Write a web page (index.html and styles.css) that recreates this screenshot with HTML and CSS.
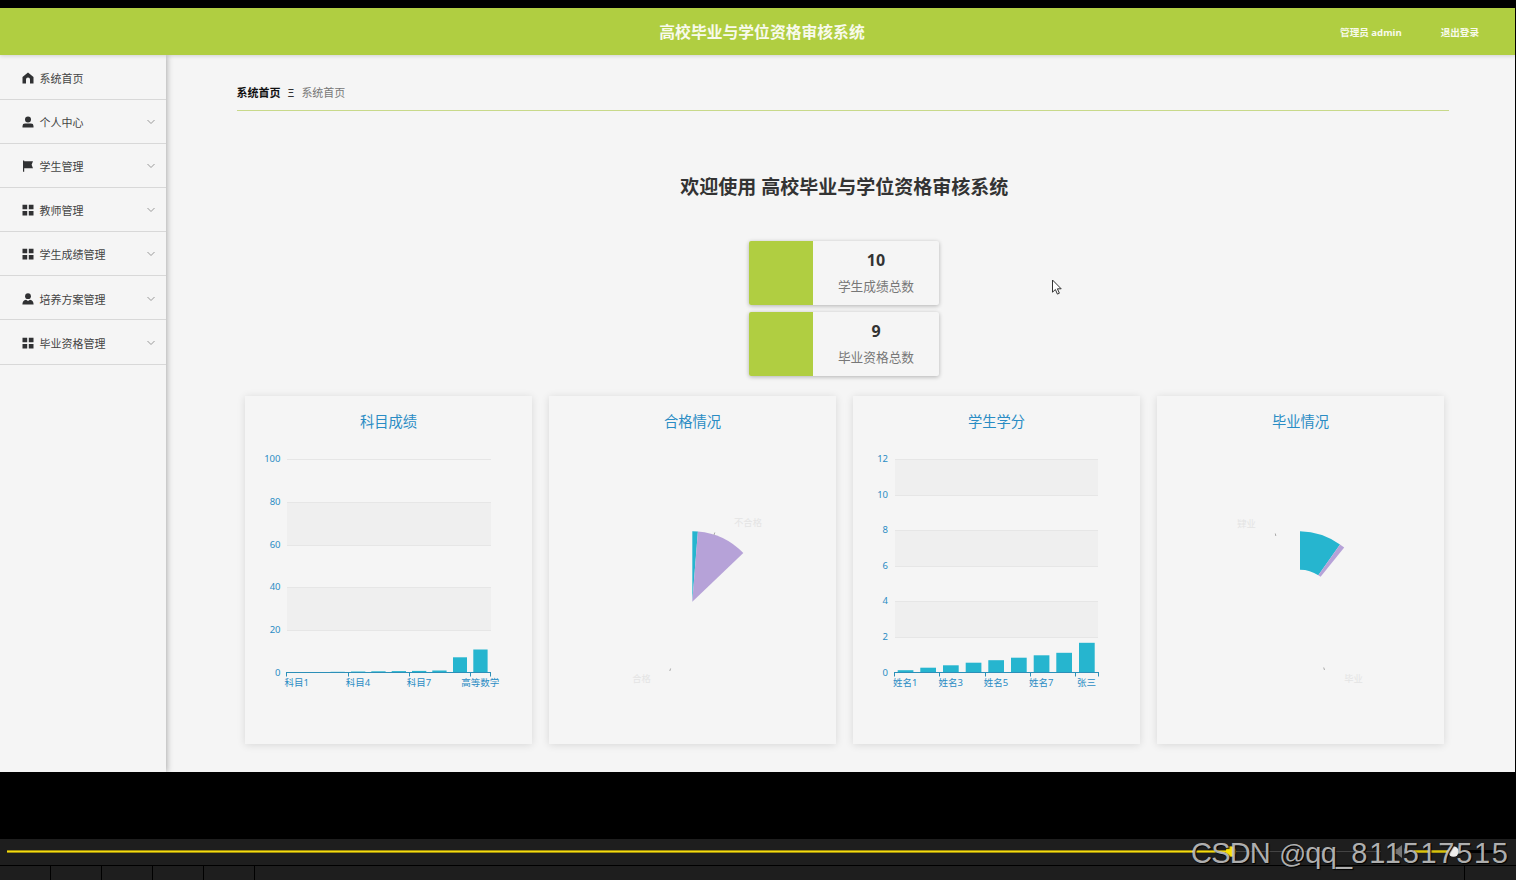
FILE: index.html
```html
<!DOCTYPE html>
<html lang="zh-CN">
  <head>
    <meta charset="UTF-8" />
    <meta name="viewport" content="width=device-width, initial-scale=1.0" />
    <title>高校毕业与学位资格审核系统</title>
    <link rel="stylesheet" href="styles.css">
  </head>
  <body>
    <!-- shared icons -->
    <svg class="sprite" width="0" height="0">
      <symbol id="icon-home" viewBox="0 0 12 12"><path d="M6 .6 11.5 5v6.4H8V7.6a2 2 0 0 0-4 0v3.8H.5V5z" /></symbol>
      <symbol id="icon-user" viewBox="0 0 12 12"><circle cx="6" cy="3.4" r="3" /><path d="M.5 11.4V10Q.5 7.6 3 7.6h6q2.500 0 2.500 2.400v1.400z" /></symbol>
      <symbol id="icon-flag" viewBox="0 0 12 12"><path d="M1 .4h1.200v.8H11L9.600 4.700 11 8.300H2.200v3.500H1z" /></symbol>
      <symbol id="icon-grid" viewBox="0 0 12 12"><path d="M.5.700h4.700v4.500H.5zM6.800.700h4.700v4.500H6.800zM.5 6.900h4.700v4.500H.5zM6.800 6.900h4.700v4.500H6.800z" /></symbol>
      <symbol id="icon-person" viewBox="0 0 12 12"><circle cx="6" cy="3.200" r="2.900" /><path d="M.4 11.500Q.4 7.500 4 6.700l2 1.200 2-1.200q3.600.8 3.600 4.800z" /></symbol>
      <symbol id="icon-arrow" viewBox="0 0 10 6"><path d="M1.500 1 5 4.500 8.500 1" fill="none" stroke="#999" /></symbol>
    </svg>

    <div class="app">
      <header class="header">
        <div class="header-title">高校毕业与学位资格审核系统</div>
        <div class="header-user">
          <span>管理员 admin</span>
          <span>退出登录</span>
        </div>
      </header>
      <div class="body">
        <nav class="sidebar">
          <ul class="menu">
            <li><svg class="icon"><use href="#icon-home" /></svg><span>系统首页</span></li>
            <li><svg class="icon"><use href="#icon-user" /></svg><span>个人中心</span><svg class="arrow"><use href="#icon-arrow" /></svg></li>
            <li><svg class="icon"><use href="#icon-flag" /></svg><span>学生管理</span><svg class="arrow"><use href="#icon-arrow" /></svg></li>
            <li><svg class="icon"><use href="#icon-grid" /></svg><span>教师管理</span><svg class="arrow"><use href="#icon-arrow" /></svg></li>
            <li><svg class="icon"><use href="#icon-grid" /></svg><span>学生成绩管理</span><svg class="arrow"><use href="#icon-arrow" /></svg></li>
            <li><svg class="icon"><use href="#icon-person" /></svg><span>培养方案管理</span><svg class="arrow"><use href="#icon-arrow" /></svg></li>
            <li><svg class="icon"><use href="#icon-grid" /></svg><span>毕业资格管理</span><svg class="arrow"><use href="#icon-arrow" /></svg></li>
          </ul>
        </nav>
        <main class="main">
          <div class="breadcrumb">
            <b>系统首页</b><i>Ξ</i><span>系统首页</span>
          </div>
          <div class="home">
            <h1 class="welcome">欢迎使用 高校毕业与学位资格审核系统</h1>
            <div class="stats">
              <div class="stat">
                <div class="stat-color"></div>
                <div class="stat-info"><strong>10</strong><span>学生成绩总数</span></div>
              </div>
              <div class="stat">
                <div class="stat-color"></div>
                <div class="stat-info"><strong>9</strong><span>毕业资格总数</span></div>
              </div>
            </div>
            <div class="charts">
              <section class="chart">
                <svg width="287" height="348">
                  <text class="chart-title" x="143.500" y="31">科目成绩</text>
                  <path class="band" d="M42 106h204v43H42zM42 191h204v43H42z" />
                  <path class="line" d="M42 63.500h204M42 106.500h204M42 149.500h204M42 191.500h204M42 234.500h204" />
                  <g class="y-label">
                    <text x="35.500" y="66">100</text>
                    <text x="35.500" y="108.500">80</text>
                    <text x="35.500" y="151.500">60</text>
                    <text x="35.500" y="194">40</text>
                    <text x="35.500" y="236.500">20</text>
                    <text x="35.500" y="279.500">0</text>
                  </g>
                  <g class="bar">
                    <rect x="65" y="276.200" width="14.300" height=".8" />
                    <rect x="85.500" y="275.800" width="14.300" height="1.200" />
                    <rect x="106" y="275.500" width="14.300" height="1.500" />
                    <rect x="126.300" y="275.300" width="14.300" height="1.700" />
                    <rect x="146.700" y="275.100" width="14.300" height="1.900" />
                    <rect x="167" y="274.900" width="14.300" height="2.100" />
                    <rect x="187.300" y="274.500" width="14.300" height="2.500" />
                    <rect x="208" y="261.300" width="14" height="15.700" />
                    <rect x="228.300" y="253.500" width="14.300" height="23.500" />
                  </g>
                  <path class="axis" d="M41 276.500h205M41.500 276v4.500M103.500 276v4.500M164.500 276v4.500M225.500 276v4.500M245.500 276v4.500" />
                  <g class="x-label">
                    <text x="51.700" y="290">科目1</text>
                    <text x="113" y="290">科目4</text>
                    <text x="174" y="290">科目7</text>
                    <text x="235.300" y="290">高等数学</text>
                  </g>
                </svg>
              </section>
              <section class="chart">
                <svg width="287" height="348">
                  <text class="chart-title" x="143.500" y="31">合格情况</text>
                  <path class="pie-a" d="M143.300 205.700V135.200A70.500 70.500 0 0 1 148.900 135.400z" />
                  <path class="pie-b" d="M143.300 205.700 148.900 135.400A70.500 70.500 0 0 1 194.300 157z" />
                  <path class="pie-tick" d="M165 139l.8-2.500M120.800 275l.8-2.500" />
                  <text class="pie-label" x="199" y="129.500" text-anchor="middle">不合格</text>
                  <text class="pie-label" x="92.500" y="286" text-anchor="middle">合格</text>
                </svg>
              </section>
              <section class="chart">
                <svg width="287" height="348">
                  <text class="chart-title" x="143.500" y="31">学生学分</text>
                  <path class="band" d="M42 63h203v36H42zM42 134h203v36H42zM42 205h203v36H42z" />
                  <path class="line" d="M42 63.500h203M42 99.500h203M42 134.500h203M42 170.500h203M42 205.500h203M42 241.500h203" />
                  <g class="y-label">
                    <text x="35" y="66">12</text>
                    <text x="35" y="101.500">10</text>
                    <text x="35" y="137">8</text>
                    <text x="35" y="172.500">6</text>
                    <text x="35" y="208">4</text>
                    <text x="35" y="243.500">2</text>
                    <text x="35" y="279.500">0</text>
                  </g>
                  <g class="bar">
                    <rect x="44.700" y="274.200" width="15.700" height="2.800" />
                    <rect x="67.300" y="271.700" width="15.700" height="5.300" />
                    <rect x="90" y="269.300" width="15.700" height="7.700" />
                    <rect x="112.700" y="266.700" width="15.700" height="10.300" />
                    <rect x="135.300" y="264.200" width="15.700" height="12.800" />
                    <rect x="158" y="261.700" width="15.700" height="15.300" />
                    <rect x="180.700" y="259.300" width="15.700" height="17.700" />
                    <rect x="203.300" y="256.800" width="15.700" height="20.200" />
                    <rect x="226" y="246.800" width="15.700" height="30.200" />
                  </g>
                  <path class="axis" d="M41 276.500h205M41.500 276v4.500M86.500 276v4.500M132.500 276v4.500M177.500 276v4.500M222.500 276v4.500M245.500 276v4.500" />
                  <g class="x-label">
                    <text x="52.300" y="290">姓名1</text>
                    <text x="97.700" y="290">姓名3</text>
                    <text x="143" y="290">姓名5</text>
                    <text x="188.300" y="290">姓名7</text>
                    <text x="233.500" y="290">张三</text>
                  </g>
                </svg>
              </section>
              <section class="chart">
                <svg width="287" height="348">
                  <text class="chart-title" x="143.500" y="31">毕业情况</text>
                  <path class="pie-a" d="M143 135.200A70.500 70.500 0 0 1 183 148.500L161.300 179.300A32 32 0 0 0 143 173.700z" />
                  <path class="pie-b" d="M183 148.500A70.500 70.500 0 0 1 187.200 151.600L163.600 180.800L161.300 179.300z" />
                  <path class="pie-tick" d="M118.800 140l-.5-2.500M167.500 274l-.8-2.500" />
                  <text class="pie-label" x="89.500" y="131" text-anchor="middle">肄业</text>
                  <text class="pie-label" x="196.500" y="286" text-anchor="middle">毕业</text>
                </svg>
              </section>
            </div>
          </div>
        </main>
      </div>
    </div>

    <footer class="player">
      <svg class="player-track" width="1516" height="26">
        <path d="M7 12.500h1224" stroke="#9c8b0c" stroke-width="3" />
        <path d="M7 12.500h1224" stroke="#f5dc10" />
        <path d="M1231 12.500h150" stroke="#444" />
        <circle cx="1231" cy="12.500" r="5.200" fill="#f9e000" />
        <path d="M1393 10h4l5-4v13l-5-4h-4z" fill="#777" />
        <path d="M1404.500 9.500v6" stroke="#555" />
        <path d="M1414 12.500h36" stroke="#d8c20c" stroke-width="2.500" />
        <path d="M1458 12.500h40" stroke="#000" stroke-width="3" />
        <circle cx="1453.500" cy="12.500" r="5.200" fill="#eee" />
      </svg>
      <div class="player-tabs">
        <i></i><i></i><i></i><i></i><i></i><i class="last"></i>
      </div>
    </footer>

    <svg class="cursor" width="12" height="17" viewBox="0 0 12 17">
      <path d="M1.500 1v12.200l2.900-2.700 2 4.600 2-.9-2-4.400h3.800z" fill="#fff" stroke="#333" />
    </svg>
    <div class="watermark">CSDN <span class="at">@</span>qq_<span class="digits">811517515</span></div>
  </body>
</html>
```
FILE: styles.css
```css
* {
  box-sizing: border-box;
}
body {
  margin: 0;
  height: 880px;
  padding-top: 8px;
  display: flex;
  flex-direction: column;
  justify-content: space-between;
  overflow: hidden;
  background-color: #000;
  font-family: "Noto Sans", "Noto Sans CJK SC", sans-serif;
}
.sprite {
  position: absolute;
}
.app {
  width: 1515px;
  height: 764px;
  display: flex;
  flex-direction: column;
  overflow: hidden;
  background-color: #f5f5f5;
}

/* header */
.header {
  flex: none;
  height: 47px;
  display: grid;
  grid-template-columns: 1fr auto 1fr;
  align-items: center;
  padding: 0 36px 0 45px;
  color: #f8faec;
  font-weight: bold;
  background-color: #b0ce41;
  box-shadow: 0 1px 4px rgba(0, 0, 0, 0.15);
}
.header-title {
  grid-column: 2;
  font-size: 15.8px;
}
.header-user {
  display: flex;
  justify-content: flex-end;
  gap: 39px;
  font-size: 9.6px;
}
.body {
  flex: 1;
  display: flex;
  overflow: hidden;
}

/* sidebar */
.sidebar {
  width: 166px;
  box-shadow: 1px 0 6px rgba(0, 0, 0, 0.3);
}
.menu {
  list-style: none;
  margin: 0;
  padding: 0.6px 0 0;
}
.menu li {
  height: 44.15px;
  display: flex;
  align-items: center;
  padding: 1.4px 10px 0 21.5px;
  border-bottom: 1px solid #d8d8d8;
  color: #444;
  font-size: 11px;
}
.icon {
  width: 12px;
  height: 12px;
  margin-right: 6px;
  fill: #303133;
}
.arrow {
  width: 10px;
  height: 6px;
  margin-left: auto;
}

/* content */
.main {
  flex: 1;
  padding: 22px 66px 0 70.5px;
}
.breadcrumb {
  height: 34px;
  display: flex;
  gap: 7px;
  line-height: 31px;
  font-size: 11px;
  color: #777;
  border-bottom: 1px solid #c8d98a;
}
.breadcrumb b {
  color: #111;
}
.breadcrumb i {
  font-style: normal;
  color: #333;
}
.home {
  padding: 61px 5px 0 8px;
}
.welcome {
  margin: 0;
  height: 30px;
  line-height: 30px;
  text-align: center;
  font-size: 19px;
  color: #333;
}
.stats {
  display: flex;
  flex-direction: column;
  align-items: center;
  gap: 7px;
  margin-top: 39px;
}
.stat {
  width: 190px;
  height: 64px;
  display: flex;
  overflow: hidden;
  border-radius: 2px;
  box-shadow: 0 1px 4px rgba(0, 0, 0, 0.28);
}
.stat-color {
  width: 63.5px;
  background-color: #b0ce41;
}
.stat-info {
  flex: 1;
  display: flex;
  flex-direction: column;
  align-items: center;
  padding-top: 6px;
  color: #777;
  font-size: 12.7px;
  line-height: 26px;
}
.stat-info strong {
  color: #333;
  font-size: 16px;
}
.charts {
  display: flex;
  gap: 17px;
  margin-top: 20px;
}
.chart {
  width: 287px;
  height: 348px;
  box-shadow: 0 1px 8px rgba(0, 0, 0, 0.12);
}
.chart svg {
  display: block;
}
.chart-title {
  font-size: 14.3px;
  fill: #2a8cc4;
  text-anchor: middle;
}
.y-label,
.x-label {
  font-size: 9.5px;
  fill: #2a8cc4;
}
.y-label {
  text-anchor: end;
}
.x-label {
  text-anchor: middle;
}
.band {
  fill: #efefef;
}
.line {
  stroke: #e6e6e6;
}
.axis {
  fill: none;
  stroke: #2c8fb8;
}
.bar,
.pie-a {
  fill: #26b5cf;
}
.pie-b {
  fill: #b6a2d8;
}
.pie-tick {
  stroke: #aaa;
}
.pie-label {
  font-size: 9.3px;
  fill: #e4e4e4;
}

/* video player strip */
.player {
  height: 41px;
  background-color: #1e1e1e;
}
.player-track {
  display: block;
}
.player-tabs {
  height: 15px;
  display: flex;
  border-top: 1px solid #000;
}
.player-tabs i {
  width: 51px;
  border-right: 1px solid #000;
}
.player-tabs .last {
  width: 1210px;
}

/* overlays */
.cursor {
  position: absolute;
  left: 1050.5px;
  top: 279px;
}
.watermark {
  position: absolute;
  left: 1191px;
  top: 831px;
  color: rgba(205, 205, 205, 0.85);
  font-family: "Liberation Sans", sans-serif;
  font-size: 29px;
  letter-spacing: -0.8px;
  word-spacing: 2px;
  line-height: 44px;
  white-space: nowrap;
  text-shadow: 1px 1px 1px #000;
}
.watermark .at {
  font-size: 26.5px;
}
.watermark .digits {
  letter-spacing: 1.7px;
}
```
